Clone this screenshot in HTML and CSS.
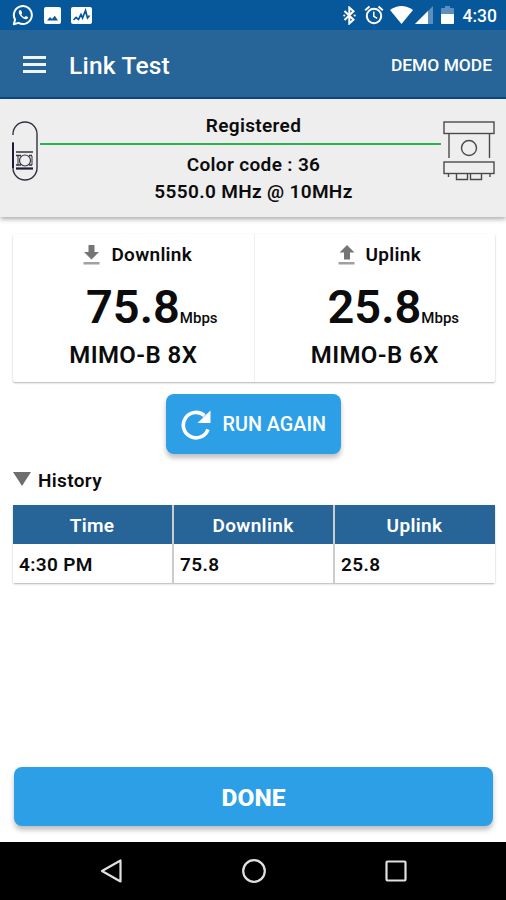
FILE: index.html
```html
<!DOCTYPE html>
<html lang="en">
<head>
    <meta charset="UTF-8">
    <meta name="viewport" content="width=device-width, initial-scale=1.0">
    <title>Link Test</title>
    <link rel="stylesheet" href="styles.css">
</head>
<body>
    <div class="status-bar">
        <div class="status-left">
            <svg width="22" height="22" viewBox="0 0 22 22">
                <path d="M1.8 20.2 L3.1 15.6 A9 9 0 1 1 6.5 18.9 Z" fill="none" stroke="#fff" stroke-width="2" stroke-linejoin="round"/>
                <path d="M8 6 c-1.8 .6 -1.7 3 .2 5.6 c2.2 2.8 5.2 4.5 7 3.4 c1 -.7 1 -1.7 .6 -2 l-2 -1 l-1.4 1.2 c-1.4 -.6 -2.3 -1.5 -3 -2.8 l.8 -1.3 l-.9 -2.4 c-.2 -.5 -.6 -.8 -1.3 -.7z" fill="#fff"/>
            </svg>
            <svg class="icon-photo" width="17" height="17" viewBox="0 0 17 17">
                <rect width="17" height="17" rx="2" fill="#fff"/>
                <path d="M3 13.5 L6 10 L8 12 L10.8 8.8 L14 13.5 Z" fill="#0b569b"/>
            </svg>
            <svg class="icon-activity" width="21" height="17" viewBox="0 0 21 17">
                <rect width="21" height="17" rx="2" fill="#fff"/>
                <path d="M2.5 13 L5 10.5 L7.5 12.5 L10 7.5 L11.5 11 L14.5 3.5 L16.5 11 L18.5 8.5" fill="none" stroke="#0b569b" stroke-width="1.7"/>
            </svg>
        </div>
        <div class="status-right">
            <svg width="13" height="19" viewBox="0 0 13 19">
                <path d="M1.5 5 L10.5 13.8 L6.3 17.5 V1.5 L10.5 5.2 L1.5 14" fill="none" stroke="#fff" stroke-width="2"/>
                <circle cx="1.3" cy="9.5" r="1.1" fill="#fff"/>
                <circle cx="11.7" cy="9.5" r="1.1" fill="#fff"/>
            </svg>
            <svg class="icon-alarm" width="20" height="20" viewBox="0 0 20 20">
                <circle cx="10" cy="11" r="7.2" fill="none" stroke="#fff" stroke-width="2"/>
                <path d="M1.2 5.2 L5.5 1.6 M18.8 5.2 L14.5 1.6" stroke="#fff" stroke-width="2"/>
                <path d="M9.8 6.5 V11.3 L13.2 13.4" fill="none" stroke="#fff" stroke-width="1.5"/>
            </svg>
            <svg class="icon-wifi" width="23" height="18" viewBox="0 0 23 18">
                <path d="M0 4 Q11.5 -4 23 4 L11.5 18 Z" fill="#fff"/>
            </svg>
            <svg class="icon-signal" width="18" height="18" viewBox="0 0 18 18">
                <path d="M0 18 L18 0 V18 Z" fill="#5b8fbf"/>
                <path d="M0 18 L13 5 V18 Z" fill="#fff"/>
            </svg>
            <svg class="icon-battery" width="13" height="18" viewBox="0 0 13 18">
                <path d="M4 0 H9 V2 H12 Q13 2 13 3 V8 H0 V3 Q0 2 1 2 H4 Z" fill="#5b8fbf"/>
                <path d="M0 8 H13 V17 Q13 18 12 18 H1 Q0 18 0 17 Z" fill="#fff"/>
            </svg>
            <span class="clock">4:30</span>
        </div>
    </div>

    <header class="app-bar">
        <div class="menu">
            <span></span>
            <span></span>
            <span></span>
        </div>
        <h1>Link Test</h1>
        <span class="mode">DEMO MODE</span>
    </header>

    <section class="link-panel">
        <svg class="radio-sm" width="26" height="60" viewBox="0 0 26 60" fill="none" stroke="#33333f" stroke-width="1.4">
            <path d="M1 14 V13 A12 12 0 0 1 25 13 V47 A12 12 0 0 1 1 47 V21.5"/>
            <path d="M1 21.5 V47" stroke="#1d1d3a" stroke-width="2"/>
            <path d="M4 31 H21 M4 34.5 H9 M17 34.5 H20 M4 44 H9 M17 44 H20"/>
            <path d="M4 47.5 H21" stroke="#1d1d3a" stroke-width="2.2"/>
            <path d="M6 35 V44 M20 35 V44" stroke-width="1"/>
            <circle cx="13" cy="39.5" r="5.5" stroke-width="1.2"/>
        </svg>
        <div class="link-info">
            <div class="link-state">Registered</div>
            <div class="link-line"></div>
            <div class="link-detail">Color code : 36</div>
            <div class="link-detail">5550.0 MHz @ 10MHz</div>
        </div>
        <svg class="radio-lg" width="52" height="60" viewBox="0 0 52 60" fill="none" stroke="#4a4a4a" stroke-width="1.4">
            <rect x="1" y="1" width="50" height="11.5"/>
            <path d="M6 13 V37 M46.5 13 V37"/>
            <circle cx="26" cy="27" r="7.5"/>
            <rect x="1" y="41" width="50" height="11.5"/>
            <path d="M13.5 53 V58.5 H24.5 V53 M27.5 53 V58.5 H38.5 V53 M5.5 53 V56 M47 53 V56"/>
        </svg>
    </section>

    <main class="content">
        <div class="results">
            <div class="result">
                <div class="result-title">
                    <svg width="18" height="20" viewBox="0 0 18 20">
                        <path d="M5.5 0 H11.5 V7 H16 L8.5 14.5 L1 7 H5.5 Z" fill="#757575"/>
                        <rect x="0.5" y="17" width="16" height="2.5" fill="#a0a0a0"/>
                    </svg>
                    <span>Downlink</span>
                </div>
                <div class="result-speed">75.8<small>Mbps</small></div>
                <div class="result-mod">MIMO-B 8X</div>
            </div>
            <div class="result">
                <div class="result-title">
                    <svg width="18" height="20" viewBox="0 0 18 20">
                        <path d="M6 14.5 H12 V7.5 H16.5 L9 0 L1.5 7.5 H6 Z" fill="#757575"/>
                        <rect x="0.5" y="17" width="16" height="2.5" fill="#a0a0a0"/>
                    </svg>
                    <span>Uplink</span>
                </div>
                <div class="result-speed">25.8<small>Mbps</small></div>
                <div class="result-mod">MIMO-B 6X</div>
            </div>
        </div>

        <button class="btn run-again">
            <svg width="30" height="30" viewBox="0 0 30 30">
                <path d="M27 19.3 A12.7 12.7 0 1 1 23.5 5.7" fill="none" stroke="#fff" stroke-width="3.6"/>
                <path d="M29.5 0.5 V13 H16.5 Z" fill="#fff"/>
            </svg>
            <span>RUN AGAIN</span>
        </button>

        <div class="history-title">
            <span class="triangle"></span>
            <span>History</span>
        </div>
        <div class="history">
            <div class="cell head">Time</div>
            <div class="cell head">Downlink</div>
            <div class="cell head">Uplink</div>
            <div class="cell">4:30 PM</div>
            <div class="cell">75.8</div>
            <div class="cell">25.8</div>
        </div>

        <button class="btn done">DONE</button>
    </main>

    <!-- Android navigation -->
    <nav class="nav-bar">
        <svg width="24" height="26" viewBox="0 0 24 26">
            <path d="M3 13 L21.5 2.5 V23.5 Z" fill="none" stroke="#e0e0e0" stroke-width="2.2" stroke-linejoin="round"/>
        </svg>
        <svg width="26" height="26" viewBox="0 0 26 26">
            <circle cx="13" cy="13" r="10.8" fill="none" stroke="#e0e0e0" stroke-width="2.2"/>
        </svg>
        <svg width="24" height="26" viewBox="0 0 24 26">
            <rect x="2.5" y="3.5" width="19" height="19" rx="1" fill="none" stroke="#e0e0e0" stroke-width="2.2"/>
        </svg>
    </nav>
</body>
</html>
```

FILE: styles.css
```css
* {
    box-sizing: border-box;
}
body {
    font-family: Roboto, sans-serif;
    font-weight: 600;
    display: flex;
    flex-direction: column;
    margin: 0;
    width: 506px;
    height: 900px;
    overflow: hidden;
    background-color: #ffffff;
    color: #0c0c0c;
}
svg {
    display: block;
    flex: none;
}

/* Status bar */
.status-bar {
    display: flex;
    justify-content: space-between;
    align-items: center;
    height: 30px;
    padding: 0 9px 0 12px;
    background-color: #07579b;
    color: #ffffff;
}
.status-left,
.status-right {
    display: flex;
    align-items: center;
}
.icon-photo {
    margin-left: 10px;
}
.icon-activity {
    margin-left: 10px;
}
.icon-alarm {
    margin-left: 8px;
}
.icon-wifi {
    margin-left: 6px;
}
.icon-signal {
    margin-left: 2px;
}
.icon-battery {
    margin-left: 8px;
}
.clock {
    margin: 2px 0 0 9px;
    font-size: 17.5px;
    font-weight: 500;
    line-height: 20px;
}

/* App bar */
.app-bar {
    display: flex;
    align-items: center;
    height: 69px;
    padding: 2px 14px 0 23px;
    background-color: #276598;
    border-bottom: 2px solid #0b4a88;
    color: #ffffff;
}
.menu {
    display: flex;
    flex-direction: column;
    gap: 4px;
    width: 23px;
}
.menu span {
    height: 3px;
    background-color: #eef6fb;
}
.app-bar h1 {
    flex: 1;
    margin: 2px 0 0 23px;
    font-size: 24.5px;
    font-weight: 500;
    letter-spacing: 0.2px;
}
.mode {
    font-size: 17.4px;
    font-weight: 500;
}

/* Link panel */
.link-panel {
    display: flex;
    height: 118px;
    padding: 0 11px 0 12px;
    background-color: #eeeeee;
    box-shadow: 0 2px 5px rgba(0, 0, 0, 0.35);
}
.radio-sm,
.radio-lg {
    margin-top: 22px;
}
.link-info {
    flex: 1;
    margin: 0 2px;
    text-align: center;
    font-size: 19px;
    letter-spacing: 0.35px;
}
.link-state {
    height: 44px;
    padding: 15px 0 0 26px;
    line-height: 24px;
}
.link-line {
    height: 2px;
    background-color: #2fb04e;
}
.link-detail {
    padding-left: 26px;
    line-height: 27px;
}
.link-line + .link-detail {
    margin-top: 6px;
}

/* Content */
.content {
    flex: 1;
    display: flex;
    flex-direction: column;
    padding: 17px 11px 16px 13px;
}
.results {
    display: flex;
    height: 148px;
    border-radius: 2px;
    box-shadow: 0 1px 2px rgba(0, 0, 0, 0.3);
}
.result {
    flex: 1;
    text-align: center;
}
.result + .result {
    border-left: 1px solid #eeeeee;
}
.result-title {
    display: flex;
    justify-content: center;
    align-items: center;
    gap: 10px;
    height: 41px;
    padding-left: 9px;
    font-size: 19px;
    letter-spacing: 0.3px;
}
.result-speed {
    height: 63px;
    padding-left: 37px;
    font-size: 47px;
    line-height: 64px;
}
.result-speed small {
    font-size: 15px;
    font-weight: 500;
}
.result-mod {
    font-size: 24px;
    line-height: 34px;
    letter-spacing: 0.4px;
}
.btn {
    border: none;
    border-radius: 8px;
    background-color: #2c9fe7;
    box-shadow: 0 4px 5px rgba(0, 0, 0, 0.25);
    color: #ffffff;
    font-family: inherit;
}
.run-again {
    display: flex;
    align-items: center;
    align-self: center;
    gap: 12px;
    width: 175px;
    height: 60px;
    margin: 12px 2px 0 0;
    padding: 1px 15px 0;
    font-size: 19.8px;
    font-weight: 500;
    white-space: nowrap;
}

/* History */
.history-title {
    display: flex;
    align-items: center;
    gap: 7px;
    height: 24px;
    margin-top: 14px;
    font-size: 19px;
    letter-spacing: 0.35px;
}
.triangle {
    border: solid transparent;
    border-width: 14px 9.5px 0;
    border-top-color: #6e6e6e;
    margin-top: -3px;
}
.history {
    display: grid;
    grid-template-columns: 159px 159px 160px;
    column-gap: 2px;
    margin-top: 13px;
    border-radius: 2px;
    background-color: #cccccc;
    box-shadow: 0 1px 2px rgba(0, 0, 0, 0.3);
}
.cell {
    height: 39px;
    padding: 1px 6px 0;
    background-color: #ffffff;
    font-size: 19px;
    line-height: 39px;
    letter-spacing: 0.35px;
}
.cell.head {
    padding-right: 7px;
    background-color: #276598;
    color: #ffffff;
    text-align: center;
}
.done {
    height: 59px;
    margin: auto 2px 0 1px;
    padding-top: 2px;
    font-size: 24.5px;
    font-weight: 800;
}

/* Navigation */
.nav-bar {
    display: flex;
    justify-content: space-between;
    align-items: center;
    height: 58px;
    padding: 0 98px 0 99px;
    background-color: #000000;
}
```
